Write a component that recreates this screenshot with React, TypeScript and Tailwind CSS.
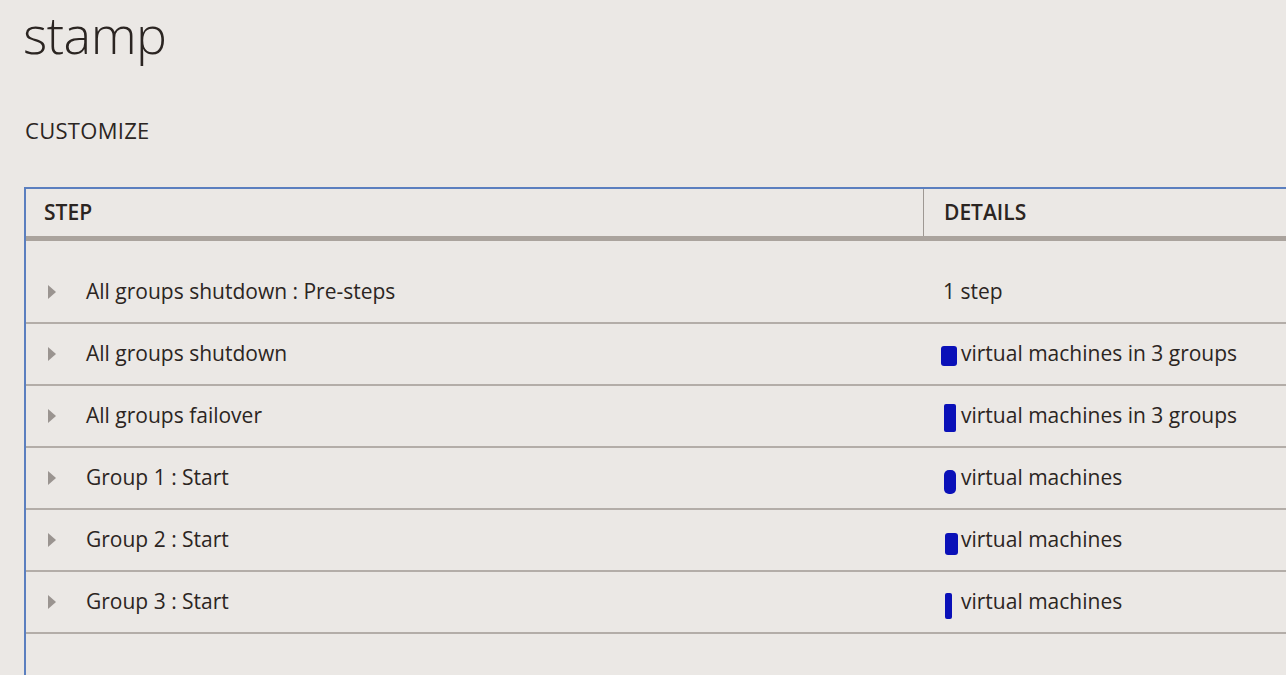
import React from "react";

type Row = { step: string; detail: string; blob?: string };

const rows: Row[] = [
  { step: "All groups shutdown : Pre-steps", detail: "1 step" },
  { step: "All groups shutdown", detail: "virtual machines in 3 groups", blob: "w-[16px] h-[20px] rounded-[3px] mt-[7px]" },
  { step: "All groups failover", detail: "virtual machines in 3 groups", blob: "w-[12px] h-[28px] rounded-[2px] mt-[3px] ml-[3px]" },
  { step: "Group 1 : Start", detail: "virtual machines", blob: "w-[12px] h-[24px] rounded-[5px] mt-[7px] ml-[3px]" },
  { step: "Group 2 : Start", detail: "virtual machines", blob: "w-[13px] h-[22px] rounded-[3px] mt-[8px] ml-[4px]" },
  { step: "Group 3 : Start", detail: "virtual machines", blob: "w-[7px] h-[26px] rounded-[2px] mt-[6px] ml-[4px]" },
];

function Arrow() {
  return (
    <svg width="10" height="16" viewBox="0 0 10 16" className="shrink-0">
      <path d="M1 1 L9 8 L1 15 Z" fill="#9a9490" />
    </svg>
  );
}

export default function App() {
  return (
    <div
      className="w-[1286px] h-[675px] overflow-hidden bg-[#ebe8e5] text-[#2b2522]"
      style={{ fontFamily: '"Open Sans", "Noto Sans", sans-serif' }}
    >
      <div className="pl-[23px] pt-[4px] h-[80px]">
        <h1 className="text-[52px] font-light leading-[60px] tracking-[-0.5px]">stamp</h1>
      </div>
      <div className="pl-[25px] pt-[36px] h-[107px]">
        <div className="text-[22px] leading-[28px] tracking-[0.3px]">CUSTOMIZE</div>
      </div>

      <div className="ml-[24px] border-l-2 border-t-2 border-[#5b7fbf] h-[488px]">
        <div className="flex h-[47px] text-[21px] font-semibold">
          <div className="w-[898px] pl-[18px] flex items-center border-r border-[#9e9893]">STEP</div>
          <div className="flex-1 pl-[20px] flex items-center">DETAILS</div>
        </div>
        <div className="h-[5px] bg-[#aaa39d]" />
        <div className="h-[21px]" />
        {rows.map((r) => (
          <div key={r.step} className="flex h-[62px] border-b-2 border-[#b3ada8] text-[21px]">
            <div className="w-[899px] pl-[21px] flex items-center gap-[29px]">
              <Arrow />
              <span>{r.step}</span>
            </div>
            <div className="flex-1 pl-[16px] flex items-center">
              {r.blob && (
                <div className="w-[18px] h-[30px] flex items-start">
                  <div className={`shrink-0 bg-[#0a10b8] ${r.blob}`} />
                </div>
              )}
              <span className={r.blob ? "ml-[2px]" : "ml-[2px]"}>{r.detail}</span>
            </div>
          </div>
        ))}
      </div>
    </div>
  );
}
